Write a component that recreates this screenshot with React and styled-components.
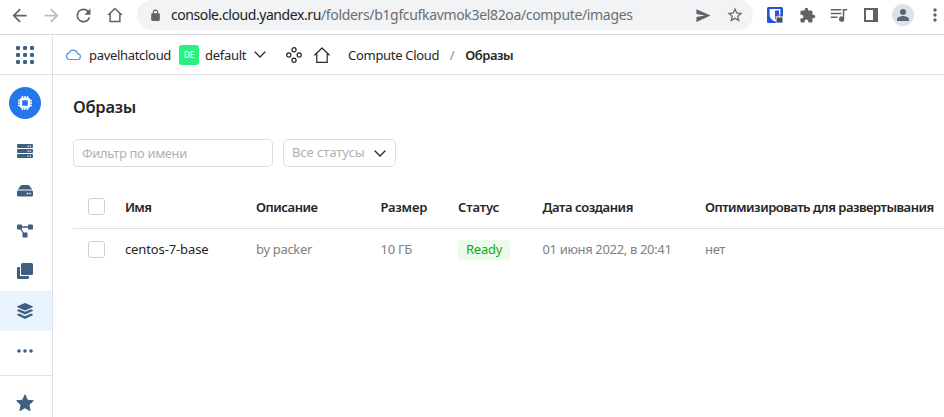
import React from 'react';
import styled, { createGlobalStyle, css } from 'styled-components';

const Global = createGlobalStyle`
  * { box-sizing: border-box; }
  html, body { margin: 0; background: #fff; overflow: hidden; }
  body { font: 400 13px/18px "Noto Sans", "Open Sans", sans-serif; color: #262626; }
  svg { display: block; flex: none; }
`;

const Page = styled.div`
  display: flex;
  flex-direction: column;
  width: 100vw;
  height: 100vh;
  overflow: hidden;
`;

/* Browser toolbar */
const BrowserBar = styled.div`
  display: flex;
  align-items: flex-start;
  flex: none;
  height: 35px;
  border-bottom: 1px solid #d9dadc;
`;
const iconSlots = css`
  display: grid;
  flex: none;
  grid-auto-flow: column;
  grid-auto-columns: 32px;
  place-items: center;
  justify-content: start;
  height: 30px;
`;
const NavButtons = styled.div`
  ${iconSlots}
  width: 137px;
  padding-left: 3px;
`;
const AddressBar = styled.div`
  display: flex;
  align-items: center;
  flex: none;
  width: 616px;
  height: 30px;
  padding: 0 2px 0 11.5px;
  border-radius: 15px;
  background: #f1f3f4;
`;
const Url = styled.div`
  flex: 1;
  margin-left: 9.5px;
  font-size: 14px;
  line-height: 20px;
  white-space: nowrap;
  letter-spacing: -0.42px;
  color: #202124;
`;
const UrlPath = styled.span`
  color: #6a6e73;
  letter-spacing: -0.338px;
`;
const AddressActions = styled.div`
  ${iconSlots}
`;
const Extensions = styled.div`
  ${iconSlots}
  padding-left: 6px;
`;
const Avatar = styled.div`
  display: grid;
  place-items: center;
  width: 22px;
  height: 22px;
  border-radius: 50%;
  background: #dee1e6;
`;

/* Console */
const Console = styled.div`
  display: flex;
  flex: 1;
  min-height: 0;
`;
const Sidebar = styled.nav`
  display: flex;
  flex-direction: column;
  flex: none;
  width: 53px;
  border-right: 1px solid #e0e0e0;
`;
const AppsCell = styled.div`
  display: flex;
  align-items: center;
  flex: none;
  height: 40px;
  padding-left: 16px;
  border-bottom: 1px solid #e0e0e0;
`;
const ServiceCell = styled.div`
  flex: none;
  height: 56px;
  padding: 12px 0 0 9px;
`;
const ServiceBadge = styled.div`
  display: grid;
  place-items: center;
  width: 32px;
  height: 32px;
  border-radius: 50%;
  background: #2575ed;
`;
const SideItem = styled.div`
  display: flex;
  align-items: center;
  flex: none;
  height: 40px;
  padding-left: 17px;
  color: #3e5f80;
  background: ${p => (p.$active ? '#e9f4fe' : 'transparent')};
`;
const Favorites = styled.div`
  flex: none;
  height: 56px;
  margin-top: 4px;
  padding: 18px 0 0 16px;
  border-top: 1px solid #e0e0e0;
`;
const Main = styled.main`
  flex: 1;
  min-width: 0;
`;
const Header = styled.header`
  display: flex;
  align-items: center;
  height: 40px;
  padding-left: 12px;
  border-bottom: 1px solid #e0e0e0;
  white-space: nowrap;
`;
const HeaderText = styled.span`
  letter-spacing: -0.31px;
`;
const FolderBadge = styled.span`
  display: grid;
  place-items: center;
  width: 20px;
  height: 20px;
  margin: 0 6px 0 8px;
  border-radius: 3px;
  background: #29f17f;
  color: #fff;
  font-size: 8px;
  line-height: 10px;
  font-weight: 500;
`;
const HeaderIcon = styled.span`
  margin-left: ${p => p.$gap}px;
`;
const Slash = styled.span`
  width: 26px;
  text-align: center;
  color: #888;
`;
const Current = styled.span`
  font-weight: 600;
  letter-spacing: -0.48px;
`;
const Content = styled.section`
  padding: 20px 0 0 20px;
`;
const Title = styled.h1`
  margin: 0;
  font-size: 16.5px;
  line-height: 24px;
  font-weight: 600;
  letter-spacing: -0.25px;
`;
const Filters = styled.div`
  display: flex;
  gap: 10px;
  margin-top: 20px;
`;
const field = css`
  height: 28px;
  padding: 0 8px;
  border: 1px solid #dedede;
  border-radius: 5px;
  color: #b0b0b0;
`;
const NameFilter = styled.input`
  ${field}
  width: 200px;
  background: #fff;
  font: inherit;
  letter-spacing: -0.35px;
  outline: 0;
  &::placeholder { color: #b0b0b0; opacity: 1; }
`;
const StatusSelect = styled.div`
  ${field}
  display: flex;
  align-items: center;
  justify-content: space-between;
  width: 113px;
  letter-spacing: -0.08px;
  padding-right: 9px;
`;
const SelectLabel = styled.span`
  padding-bottom: 2px;
`;
const Table = styled.div`
  margin-top: 18px;
`;
const Row = styled.div`
  display: grid;
  grid-template-columns: 37px 131px 124.5px 77.5px 84.5px 162.5px 1fr;
  align-items: center;
  height: ${p => (p.$head ? 44 : 42)}px;
  padding-left: 15px;
  border-bottom: ${p => (p.$head ? '1px solid #e0e0e0' : '0')};
  white-space: nowrap;
`;
const Check = styled.span`
  width: 17px;
  height: 17px;
  margin-bottom: ${p => p.$lift}px;
  border: 1px solid #cfcfcf;
  border-radius: 3px;
`;
const HeadCell = styled.span`
  padding-top: 1px;
  font-weight: 600;
  letter-spacing: ${p => p.$ls}px;
`;
const Cell = styled.span`
  padding-bottom: 2px;
  color: ${p => (p.$primary ? '#262626' : '#808080')};
  letter-spacing: ${p => p.$ls}px;
`;
const Status = styled.span`
  justify-self: start;
  width: 52px;
  height: 20px;
  padding-left: 8px;
  border-radius: 4px;
  background: #ebfaeb;
  color: #17a917;
  line-height: 19px;
  letter-spacing: -0.26px;
`;

const Glyph = ({ d, size = 18, color = '#5f6368', box = 24 }) => (
  <svg width={size} height={size} viewBox={`0 0 ${box} ${box}`} fill={color}>
    <path d={d} fillRule="evenodd" />
  </svg>
);
const Line = ({ d, w = 16, h = 16, color = '#262626', sw = 1.2 }) => (
  <svg width={w} height={h} viewBox={`0 0 ${w} ${h}`} fill="none" stroke={color} strokeWidth={sw} strokeLinejoin="round" strokeLinecap="round">
    <path d={d} />
  </svg>
);
const Side = ({ children }) => (
  <svg width="16" height="16" viewBox="0 0 16 16" fill="currentColor">{children}</svg>
);

const ServersIcon = () => (
  <Side>
    {[1, 6, 11].map(y => (
      <g key={y}>
        <rect y={y} width="16" height="4" rx="1" />
        <path d={`M10.5 ${y + 1.5}h1.2v1.2h-1.2zM12.8 ${y + 1.5}h1.2v1.2h-1.2z`} fill="#fff" />
      </g>
    ))}
  </Side>
);
const DiskIcon = () => (
  <Side>
    <path d="M3.6 2.7Q4.2 2 5 2h6q.8 0 1.4.7L15.3 6.6H.7z" />
    <rect y="7.6" width="16" height="6" rx="1.4" />
    <path d="M9.8 9.8h1.4v1.4H9.8zM12.3 9.8h1.4v1.4h-1.4z" fill="#fff" />
  </Side>
);
const NetworkIcon = () => (
  <Side>
    <path d="M4 4h8M3.5 5.5L7 11" stroke="currentColor" strokeWidth="1.3" />
    <rect y="1.5" width="5" height="5" rx=".8" />
    <rect x="11" y="1.5" width="5" height="5" rx=".8" />
    <rect x="5.5" y="9.5" width="5" height="5" rx=".8" />
  </Side>
);
const CopyIcon = () => (
  <Side>
    <rect x="4" width="12" height="12" rx="1.5" />
    <path d="M1.2 4H3v9h9v1.8q0 1.2-1.2 1.2H1.2Q0 16 0 14.8V5.2Q0 4 1.2 4z" />
  </Side>
);
const LayersIcon = () => (
  <Side>
    <path d="M8 0l7.6 3.2q.8.5 0 1L8 7.6.4 4.2q-.8-.5 0-1z" />
    <path d="M.4 6.9L2 6.2l6 2.6 6-2.6 1.6.7q.8.5 0 1L8 11.4.4 7.9q-.8-.5 0-1z" />
    <path d="M.4 11.2l1.6-.7 6 2.7 6-2.7 1.6.7q.8.5 0 1L8 16 .4 12.2q-.8-.5 0-1z" />
  </Side>
);
const MoreIcon = () => (
  <Side>
    <circle cx="2" cy="8" r="1.8" /><circle cx="8" cy="8" r="1.8" /><circle cx="14" cy="8" r="1.8" />
  </Side>
);
const AppsIcon = () => (
  <svg width="18" height="18" viewBox="0 0 18 18" fill="#3e5f80">
    {[0, 7, 14].map(y => [0, 7, 14].map(x => <rect key={`${x}-${y}`} x={x} y={y} width="4" height="4" rx="1.3" />))}
  </svg>
);
const ChipIcon = () => (
  <svg width="16" height="16" viewBox="0 0 16 16" fill="none" stroke="#fff">
    <path d="M5.5 1v2.5M8 1v2.5M10.5 1v2.5M5.5 12.5V15M8 12.5V15M10.5 12.5V15M1 5.5h2.5M1 8h2.5M1 10.5h2.5M12.5 5.5H15M12.5 8H15M12.5 10.5H15" strokeWidth="1.5" />
    <rect x="4" y="4" width="8" height="8" rx="1" strokeWidth="2.4" />
  </svg>
);
const ShieldExtension = () => (
  <svg width="16" height="16" viewBox="0 0 16 16">
    <rect width="16" height="16" rx="1.5" fill="#2452d9" />
    <path d="M2.6 2h10.8v6q0 4-5.4 6.5Q2.6 12 2.6 8z" fill="#fff" />
    <path d="M8 3.5h4V8q0 2.8-4 4.8z" fill="#2452d9" />
    <path d="M8.7 15.5V9.5h1.2a2.5 2.5 0 014.8 0H16v6z" fill="#fff" />
    <rect x="9.5" y="10.5" width="6" height="4.7" rx=".5" fill="#505050" />
    <path d="M10.9 10.5v-.9a1.5 1.5 0 013 0v.9" fill="none" stroke="#505050" />
  </svg>
);
const ClustersIcon = () => (
  <svg width="16" height="16" viewBox="0 0 16 16" fill="none" stroke="#262626" strokeWidth="1.2">
    <circle cx="8" cy="2.8" r="2.1" /><circle cx="8" cy="13.2" r="2.1" /><circle cx="2.8" cy="8" r="2.1" /><circle cx="13.2" cy="8" r="2.1" />
  </svg>
);

const sideIcons = [ServersIcon, DiskIcon, NetworkIcon, CopyIcon, LayersIcon, MoreIcon];
const columns = [
  ['Имя', -0.75], ['Описание', -0.46], ['Размер', -0.23], ['Статус', -0.15],
  ['Дата создания', -0.41], ['Оптимизировать для развертывания', -0.51],
];

export default function App() {
  return (
    <Page>
      <Global />
      <BrowserBar>
        <NavButtons>
          <Glyph d="M20 11H7.83l5.59-5.59L12 4l-8 8 8 8 1.41-1.41L7.83 13H20z" size={21} />
          <Glyph d="M4 11h12.17l-5.59-5.59L12 4l8 8-8 8-1.41-1.41L16.17 13H4z" size={21} color="#babcbe" />
          <Glyph d="M17.65 6.35A7.958 7.958 0 0012 4a8 8 0 107.73 10h-2.08A6 6 0 1112 6c1.66 0 3.14.69 4.22 1.78L13 11h7V4z" size={21} />
          <Glyph d="M12 2L1.5 12h3V21.5h15V12h3zM12 4.8l5.5 5.2v9.5h-11V10z" size={18} />
        </NavButtons>
        <AddressBar>
          <Glyph d="M18 8h-1V6A5 5 0 007 6v2H6a2 2 0 00-2 2v10a2 2 0 002 2h12a2 2 0 002-2V10a2 2 0 00-2-2zM9 8V6a3 3 0 016 0v2z" size={13} />
          <Url>console.cloud.yandex.ru<UrlPath>/folders/b1gfcufkavmok3el82oa/compute/images</UrlPath></Url>
          <AddressActions>
            <Glyph d="M2 3l20 9-20 9v-7l12-2-12-2z" size={17} />
            <Glyph d="M22 9.24l-7.19-.62L12 2 9.19 8.63 2 9.24l5.46 4.73L5.82 21 12 17.27 18.18 21l-1.63-7.03zM12 15.4l-3.76 2.27 1-4.28-3.32-2.88 4.38-.38L12 6.1l1.71 4.04 4.38.38-3.32 2.88 1 4.28z" size={18} />
          </AddressActions>
        </AddressBar>
        <Extensions>
          <ShieldExtension />
          <Glyph d="M20.5 11H19V7a2 2 0 00-2-2h-4V3.5a2.5 2.5 0 00-5 0V5H4a2 2 0 00-2 2v3.8h1.5a2.7 2.7 0 010 5.4H2V20a2 2 0 002 2h3.8v-1.5a2.7 2.7 0 015.4 0V22H17a2 2 0 002-2v-4h1.5a2.5 2.5 0 000-5z" size={17} />
          <Glyph d="M1 4h14v2H1zM1 9h14v2H1zM1 14h9v2H1zM17 4h6v2h-4v11.5a3.5 3.5 0 11-2-3.15z" size={18} />
          <Glyph d="M0 0h14v14H0zM2 2v10h7V2z" size={14} box={14} />
          <Avatar><Glyph d="M12 12a4.5 4.5 0 100-9 4.5 4.5 0 000 9zM3 21v-2.5C3 15 9 13.5 12 13.5s9 1.5 9 5V21z" size={16} color="#56657a" /></Avatar>
          <Glyph d="M12 8a2 2 0 100-4 2 2 0 000 4zM12 14a2 2 0 100-4 2 2 0 000 4zM12 20a2 2 0 100-4 2 2 0 000 4z" size={20} />
        </Extensions>
      </BrowserBar>
      <Console>
        <Sidebar>
          <AppsCell><AppsIcon /></AppsCell>
          <ServiceCell><ServiceBadge><ChipIcon /></ServiceBadge></ServiceCell>
          {sideIcons.map((Icon, i) => <SideItem key={i} $active={i === 4}><Icon /></SideItem>)}
          <Favorites>
            <svg width="18" height="18" viewBox="0 0 18 18" fill="#3e5f80" stroke="#3e5f80" strokeLinejoin="round">
              <path d="M9 .8l2.4 5.4 5.9.6-4.4 4 1.2 5.9L9 13.7l-5.1 3 1.2-5.9-4.4-4 5.9-.6z" />
            </svg>
          </Favorites>
        </Sidebar>
        <Main>
          <Header>
            <Line d="M4 11.5h8.3A2.9 2.9 0 0012.6 5.7 4.4 4.4 0 004.2 4.9 3.4 3.4 0 004 11.5z" h={13} color="#4b93e8" sw={1.2} />
            <HeaderIcon $gap={8}><HeaderText>pavelhatcloud</HeaderText></HeaderIcon>
            <FolderBadge>DE</FolderBadge>
            <HeaderText>default</HeaderText>
            <HeaderIcon $gap={8}><Line d="M1 1l5 5 5-5" w={12} h={7} /></HeaderIcon>
            <HeaderIcon $gap={20}><ClustersIcon /></HeaderIcon>
            <HeaderIcon $gap={12}><Line d="M.8 8L8 1l7.2 7M2.8 7v8.4h10.4V7" h={16} /></HeaderIcon>
            <HeaderIcon $gap={18}><HeaderText>Compute Cloud</HeaderText></HeaderIcon>
            <Slash>/</Slash>
            <Current>Образы</Current>
          </Header>
          <Content>
            <Title>Образы</Title>
            <Filters>
              <NameFilter placeholder="Фильтр по имени" />
              <StatusSelect><SelectLabel>Все статусы</SelectLabel><Line d="M1 1l5 5 5-5" w={12} h={7} sw={1.4} /></StatusSelect>
            </Filters>
            <Table>
              <Row $head>
                <Check $lift={0} />
                {columns.map(([label, ls]) => <HeadCell key={label} $ls={ls}>{label}</HeadCell>)}
              </Row>
              <Row>
                <Check $lift={1} />
                <Cell $primary $ls={-0.12}>centos-7-base</Cell>
                <Cell $ls={-0.32}>by packer</Cell>
                <Cell $ls={-0.28}>10 ГБ</Cell>
                <Status>Ready</Status>
                <Cell $ls={-0.34}>01 июня 2022, в 20:41</Cell>
                <Cell $ls={-0.35}>нет</Cell>
              </Row>
            </Table>
          </Content>
        </Main>
      </Console>
    </Page>
  );
}
